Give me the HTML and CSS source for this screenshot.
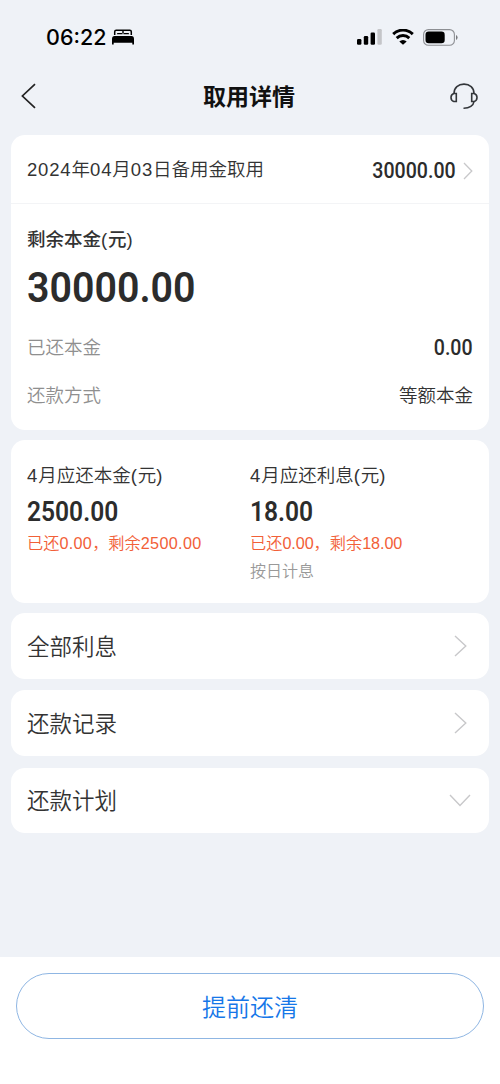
FILE: index.html
```html
<!DOCTYPE html>
<html lang="zh-CN">
<head>
<meta charset="UTF-8">
<title>取用详情</title>
<link rel="stylesheet" href="styles.css">
</head>
<body>
<div class="screen">
  <header class="status">
    <div class="status-left">
      <span class="time">06:22</span>
      <svg class="bed" width="22" height="16" viewBox="0 0 22 16">
        <path d="M2.700 6V2.700Q2.700 1.200 4.200 1.200H17.800Q19.300 1.200 19.300 2.700V6" fill="none" stroke="#000" stroke-width="1.500"/>
        <path d="M10.300 1H11.700V4.200H10.300zM4.800 5.200Q4.800 3.900 6 3.900H9.500Q10.700 3.900 10.700 5.200H11.300Q11.300 3.900 12.500 3.900H16Q17.200 3.900 17.200 5.200z"/>
        <path d="M0 15.400V10Q0 7 2.500 7H19.500Q22 7 22 10V15.400H20.300V13.700H1.700V15.400z"/>
      </svg>
    </div>
    <div class="status-right">
      <svg width="25" height="16" viewBox="0 0 25 16">
        <rect x="0" y="10" width="4.400" height="5.800" rx="1.200"/>
        <rect x="6.800" y="7" width="4.400" height="8.800" rx="1.200"/>
        <rect x="13.600" y="3.500" width="4.400" height="12.300" rx="1.200"/>
        <rect x="20.400" y="0" width="4.400" height="15.800" rx="1.200" fill="#c4c5c8"/>
      </svg>
      <svg class="wifi" width="22" height="16" viewBox="0 0 22 16">
        <path d="M1.200 5.100A14 14 0 0 1 20.800 5.100M4.700 9.100A9 9 0 0 1 17.300 9.100" fill="none" stroke="#000" stroke-width="2.900"/>
        <path d="M11 15.800L7.300 12.400A5.300 5.300 0 0 1 14.700 12.400z"/>
      </svg>
      <svg class="battery" width="35" height="17" viewBox="0 0 35 17">
        <rect x=".6" y=".6" width="30.800" height="15.600" rx="4.800" fill="none" stroke="#8d8f93" stroke-width="1.100"/>
        <rect x="2.500" y="2.500" width="19.200" height="11.800" rx="3.200"/>
        <path d="M33 6V11Q34.600 10.400 34.600 8.500T33 6" fill="#77797c"/>
      </svg>
    </div>
  </header>
  <nav class="navbar">
    <svg width="15" height="26" viewBox="0 0 15 26"><path d="M14 1.200L1.400 13L14 24.800" fill="none" stroke="#222" stroke-width="1.700"/></svg>
    <h1 class="title">取用详情</h1>
    <svg width="28" height="27" viewBox="0 0 28 27" fill="none" stroke="#33363a" stroke-width="1.600">
      <path d="M4 10.500C4 4.500 8.300 1.100 14 1.100S24 4.500 24 10.500"/>
      <path d="M6.300 10.500H3.800Q1 11.500 1 14.500T3.800 18.500H6.300zM21.700 10.500H24.200Q27 11.500 27 14.500T24.200 18.500H21.700z"/>
      <path d="M24 18.500C23.500 22.500 19.500 25.400 13.500 25.300"/>
    </svg>
  </nav>
  <main class="content">
    <section class="card">
      <div class="summary">
        <span><span class="num">2024</span>年<span class="num">04</span>月<span class="num">03</span>日备用金取用</span>
        <span class="summary-value"><span class="din">30000.00</span>
          <svg width="10" height="18" viewBox="0 0 10 18"><path d="M1 1L8.800 9L1 17" fill="none" stroke="#c8c8ca" stroke-width="1.300"/></svg>
        </span>
      </div>
      <div class="balance">
        <div class="balance-label">剩余本金<span class="num">(</span>元<span class="num">)</span></div>
        <div class="balance-value"><span class="din din-large">30000.00</span></div>
        <div class="row"><span class="muted">已还本金</span><span class="din din-row">0.00</span></div>
        <div class="row"><span class="muted">还款方式</span><span>等额本金</span></div>
      </div>
    </section>
    <section class="card dues">
      <div>
        <div class="due-label"><span class="num">4</span>月应还本金<span class="num">(</span>元<span class="num">)</span></div>
        <div class="due-value"><span class="din din-medium">2500.00</span></div>
        <div class="due-sub">已还<span class="num">0.00</span>，剩余<span class="num">2500.00</span></div>
      </div>
      <div>
        <div class="due-label"><span class="num">4</span>月应还利息<span class="num">(</span>元<span class="num">)</span></div>
        <div class="due-value"><span class="din din-medium">18.00</span></div>
        <div class="due-sub due-sub-tight">已还<span class="num">0.00</span>，剩余<span class="num">18.00</span></div>
        <div class="due-note">按日计息</div>
      </div>
    </section>
    <section class="card link">
      <span>全部利息</span>
      <svg width="13" height="22" viewBox="0 0 13 22"><path d="M1 1L11.800 11L1 21" fill="none" stroke="#c8c8ca" stroke-width="1.400"/></svg>
    </section>
    <section class="card link">
      <span>还款记录</span>
      <svg width="13" height="22" viewBox="0 0 13 22"><path d="M1 1L11.800 11L1 21" fill="none" stroke="#c8c8ca" stroke-width="1.400"/></svg>
    </section>
    <section class="card link link-plan">
      <span>还款计划</span>
      <svg class="down" width="22" height="13" viewBox="0 0 22 13"><path d="M1 1L11 11.500L21 1" fill="none" stroke="#c8c8ca" stroke-width="1.400"/></svg>
    </section>
  </main>
  <footer class="footer"><button class="payoff">提前还清</button></footer>
</div>
</body>
</html>
```
FILE: styles.css
```css
* { box-sizing: border-box; }
body {
  margin: 0;
  background: #eff2f7;
  color: #333;
  font: 350 18.500px/28px "Noto Sans CJK SC", sans-serif;
}
svg { display: block; flex: none; }
.screen { height: 1084px; display: flex; flex-direction: column; }
.num { font-family: "Liberation Sans", sans-serif; letter-spacing: .045em; }
.status {
  height: 74px;
  padding: 0 42px 0 46px;
  display: flex;
  justify-content: space-between;
  align-items: center;
}
.status-left, .status-right { display: flex; align-items: center; }
.time { font: 550 21.500px/28px Inter, sans-serif; color: #000; width: 60px; white-space: nowrap; }
.bed { margin-left: 6px; }
.wifi { margin-left: 10px; }
.battery { margin-left: 9px; }
.navbar {
  height: 61px;
  padding: 0 22px 17px 21px;
  display: flex;
  justify-content: space-between;
  align-items: center;
}
.title { margin: 0 0 2px 12px; font-size: 23px; line-height: 34px; font-weight: 700; color: #111; }
.content { flex: 1; padding: 0 11px; }
.card { background: #fff; border-radius: 14px; margin-bottom: 10.500px; }
.summary {
  height: 69px;
  padding: 0 16px;
  border-bottom: 1px solid #f3f4f6;
  display: flex;
  justify-content: space-between;
  align-items: center;
}
.summary-value { display: flex; align-items: center; gap: 7px; padding-top: 3px; }
.din {
  display: inline-block;
  font: 550 22px/28px Roboto, sans-serif;
  color: #2c2c2c;
  transform: scaleX(.89);
  transform-origin: right center;
}
.din-row { padding-top: 3px; }
.din-large { font-size: 43px; line-height: 66px; font-weight: 600; transform: scaleX(.915); transform-origin: left center; }
.din-medium { font-size: 27px; line-height: 31px; font-weight: 600; transform: scaleX(.91); transform-origin: left center; }
.balance { padding: 20px 16px 12px; }
.balance-label { font-weight: 500; }
.balance-value { height: 68.500px; }
.row { height: 47.500px; display: flex; justify-content: space-between; align-items: center; }
.muted { color: #8f8f8f; }
.dues { height: 162.500px; padding: 19.500px 16px; display: grid; grid-template-columns: 223px 1fr; }
.due-value { height: 32px; margin-top: 7px; }
.due-sub { font-size: 16.200px; line-height: 27px; color: #f26038; }
.due-sub .num { letter-spacing: .02em; }
.due-sub-tight .num { letter-spacing: -.005em; }
.due-note { font-size: 16px; line-height: 27px; color: #999; }
.link {
  height: 66px;
  padding: 0 22px 0 16px;
  display: flex;
  justify-content: space-between;
  align-items: center;
  font-size: 22.500px;
}
.link span { padding-bottom: 2px; }
.link-plan { margin-top: 12px; height: 65px; }
.down { margin-right: -4px; }
.footer { height: 127px; padding: 16px 16px 0; background: #fff; }
.payoff {
  display: block;
  width: 100%;
  height: 66px;
  padding: 0;
  border: 1px solid #8fb6e3;
  border-radius: 33px;
  background: #fff;
  color: #1677e8;
  font: 350 24px/34px "Noto Sans CJK SC", sans-serif;
}
```
